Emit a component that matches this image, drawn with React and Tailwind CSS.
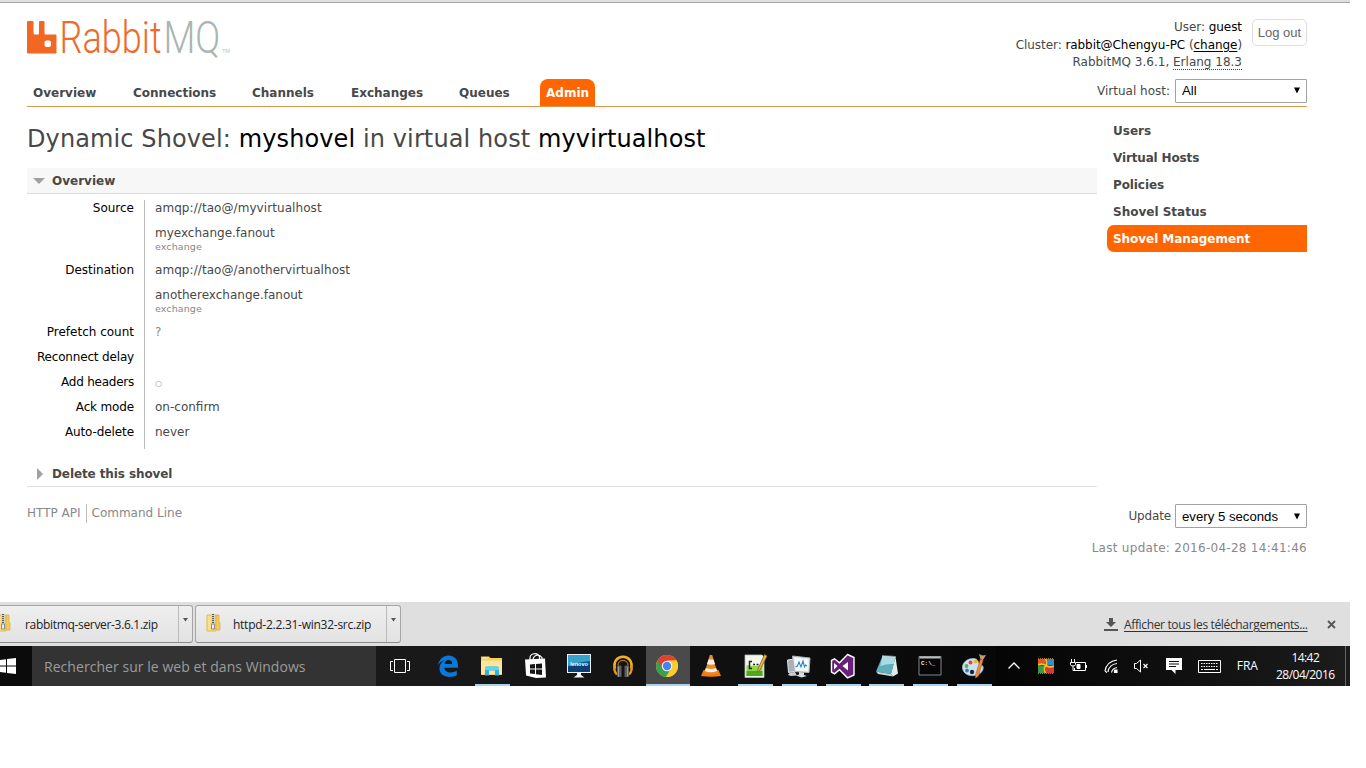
import React from "react";

const tabs = [
  ["Overview", "w-[76px]"],
  ["Connections", "w-[95px]"],
  ["Channels", "w-[75px]"],
  ["Exchanges", "w-[84px]"],
  ["Queues", "w-[63px]"],
];

const sideLinks = [
  ["Users", ""],
  ["Virtual Hosts", "tracking-[-0.15px]"],
  ["Policies", "tracking-[-0.1px]"],
  ["Shovel Status", ""],
];

function Logo() {
  return (
    <svg width="216" height="54" viewBox="0 -9 216 54" className="block">
      <path
        d="M1 2h4.500q1 0 1 1v11q0 1.500 1 1.500h3.500q1 0 1-1.500v-11q0-1 1-1h3.500q1 0 1 1v11q0 1.500 1 1.500h10q1 0 1 1v17q0 1-1 1h-27.500q-1 0-1-1v-30.500q0-1 1-1z"
        fill="#f26822"
      />
      <rect x="17.500" y="21.500" width="6.500" height="6.500" rx="2" fill="#fff" />
      <g transform="translate(32.500 0) scale(.82 1)">
        <text x="0" y="34" fontSize="45" textLength="124.500" lengthAdjust="spacingAndGlyphs" fill="#ee6b2b" className="font-['Roboto','Liberation_Sans',sans-serif] font-light">Rabbit</text>
      </g>
      <g transform="translate(136.500 0) scale(.8 1)">
        <text x="0" y="34" fontSize="45" textLength="71" lengthAdjust="spacingAndGlyphs" fill="#a9b5b0" className="font-['Roboto','Liberation_Sans',sans-serif] font-light">MQ</text>
      </g>
      <text x="195" y="34" fontSize="5.500" fill="#b9c2be" className="font-['Liberation_Sans',sans-serif]">TM</text>
    </svg>
  );
}

function Select({ children }) {
  return (
    <div className="flex h-[24px] w-[132px] items-center justify-between rounded-[1px] border border-[#a2a2a2] bg-white pr-[5px] pl-[6px] font-['Liberation_Sans',sans-serif] text-[13.2px] text-black">
      <span className="pt-px">{children}</span>
      <svg width="8" height="7" viewBox="0 0 8 7"><path d="M1 .5h6L4 6.500z" fill="#000" /></svg>
    </div>
  );
}

function Row({ label, children, last, fit = "" }) {
  return (
    <div className="flex">
      <div className={"w-[117px] pt-px pr-[10px] text-right leading-[15px] text-black " + fit}>{label}</div>
      <div className="border-l border-[#bbb] pb-[9px] pl-[10px]">{children}</div>
    </div>
  );
}

function Line({ children }) {
  return <div className="h-[16px] pt-px leading-[15px]">{children}</div>;
}

function Endpoint({ uri, name }) {
  return (
    <>
      <div className="tracking-[0.07px]"><Line>{uri}</Line></div>
      <div className="pt-[9px]">
        <Line>{name}</Line>
        <div className="h-[12px] text-[9.5px] leading-[12px] tracking-[0.1px] text-[#888]">exchange</div>
      </div>
    </>
  );
}

function Zip() {
  return (
    <svg width="15" height="18" viewBox="0 0 15 18">
      <path d="M1 1h9v16H1z" fill="#fbe08a" stroke="#e3b84a" />
      <path d="M10 1h3v8h1v7h-4z" fill="#f3cb5b" stroke="#d9ab37" strokeWidth=".7" />
      <path d="M5 0h4v16H5z" fill="#d8d5c4" />
      <path d="M7 0v12" stroke="#555" strokeWidth="2" strokeDasharray="1 1" />
      <path d="M5.500 10h3v5h-3z" fill="#eee" stroke="#777" strokeWidth=".8" />
    </svg>
  );
}

function Download({ name, className, nameClass }) {
  return (
    <div className={"flex h-[38px] rounded-[3px] border border-[#a6a6a6] border-b-[#8c8c8c] bg-gradient-to-b from-[#efefef] to-[#e2e2e2] " + className}>
      <div className="flex flex-1 items-center">
        <div className="mb-[3px]"><Zip /></div>
        <span className={"whitespace-nowrap pt-[2px] text-[12px] text-[#222] " + nameClass}>{name}</span>
      </div>
      <div className="flex w-[14px] justify-center border-l border-[#bbb] pt-[12px]">
        <svg width="5" height="4" viewBox="0 0 5 4"><path d="M0 0h5L2.500 3.500z" fill="#555" /></svg>
      </div>
    </div>
  );
}

const Svg = ({ children, size = 26 }) => (
  <svg width={size} height={size} viewBox="0 0 26 26" fill="none">{children}</svg>
);

const EdgeIcon = () => (
  <Svg>
    <path d="M3 12.500C4 6 8.500 2.500 13.500 2.500c6 0 9.500 4.200 9.500 10v2.300H9.400c.2 3.300 3 4.700 6.200 4.700 2.300 0 4.300-.6 6.200-1.700v4.500c-2 1.200-4.600 1.700-7.300 1.700-6 0-10-3.300-10-8.700 0-3.500 2-6.500 5-8.100C6.500 8 4.500 9.500 3 12.500zM9.600 11h7.600c0-2.600-1.300-3.900-3.600-3.900-2.200 0-3.700 1.500-4 3.900z" fill="#0b78d7" />
  </Svg>
);
const ExplorerIcon = () => (
  <Svg>
    <path d="M2 3.500h8l1.500 1.500h11.500v17h-21z" fill="#f5cd63" />
    <path d="M2 7.500h21v13.500h-21z" fill="#fde69a" />
    <path d="M3.500 5h5" stroke="#fff4c5" />
    <path d="M6 15q0-1.500 1.500-1.500h11q1.500 0 1.500 1.500v7.500h-4v-5h-6v5h-4z" fill="#2fb3e3" />
    <path d="M6 15q0-1.500 1.500-1.500h11q1.500 0 1.500 1.500v2H6z" fill="#6bd0ee" />
  </Svg>
);
const StoreIcon = () => (
  <Svg>
    <path d="M2 6.500l20 -1 1 19-10 .5-10-2.500z" fill="#fff" />
    <path d="M7 7V5c0-5 8-6 9.500-1v3M10 6c1-4 6-5.500 9-1.500V7" stroke="#fff" strokeWidth="1.200" />
    <path d="M7 11.500l5-.4v4.500H7zM13 11l6-.5v5.100h-6zM7 16.600H12v4.500l-5-.6zM13 16.600h6V22l-6-.7z" fill="#151515" />
  </Svg>
);
const LenovoIcon = () => (
  <Svg>
    <path d="M1 1h24v19H1z" fill="#e8f2f6" />
    <path d="M2 2h22v17H2z" fill="#0e5e93" />
    <path d="M2 2h22v6q-12 1-22 5z" fill="#38a2ca" />
    <path d="M2 14q12-4 22-2v7H2z" fill="#0b3f75" />
    <text x="13" y="12.500" fontSize="5.500" textAnchor="middle" fill="#fff" className="font-['Liberation_Sans',sans-serif] font-bold">lenovo</text>
    <path d="M11 20h4v2l3.500 2.500h-11L11 22z" fill="#f2f5f6" />
  </Svg>
);
const MusicIcon = () => (
  <Svg>
    <path d="M5 15.500C3 8.500 7.500 3.800 13 3.800s10 4.700 8 11.700" stroke="#f5b01f" strokeWidth="2.600" />
    <path d="M8 12.500C8 9 10 7.500 13 7.500s5 1.500 5 5" stroke="#d98a1c" strokeWidth="1" />
    <path d="M5 12.500q-2 5 2 9M21 12.500q2 5-2 9" stroke="#e8961b" strokeWidth="2.400" />
    <rect x="7" y="12.500" width="4.500" height="11.500" rx="1" fill="#5f5f5f" />
    <rect x="14.500" y="12.500" width="4.500" height="11.500" rx="1" fill="#5f5f5f" />
    <path d="M8.500 13.500v10M17.500 13.500v10" stroke="#999" />
  </Svg>
);
const ChromeIcon = () => (
  <Svg>
    <circle cx="13" cy="13" r="11" fill="#fbcb2f" />
    <path d="M13 13L3.500 7.500A11 11 0 0 1 22.500 7.500L13 8z" fill="#e0402f" />
    <path d="M3.500 7.500A11 11 0 0 0 12 24l5-8.500-4-2.500z" fill="#33a352" />
    <path d="M13 7.500h9.500a11 11 0 0 1-10.500 16.500l5.500-8.500z" fill="#fbcb2f" />
    <path d="M3.500 7.500L8.500 16 9 11l4-4z" fill="#e0402f" />
    <circle cx="13" cy="13" r="5.300" fill="#f5f5f5" />
    <circle cx="13" cy="13" r="4.200" fill="#4384ef" />
  </Svg>
);
const VlcIcon = () => (
  <Svg>
    <path d="M5.500 17h15l2.500 6q-10 1.500-20 0z" fill="#ee7c16" />
    <path d="M11.800 2h2.400l5.300 18q-6.500 2.500-13 0z" fill="#f58720" />
    <path d="M10.500 6.500h5l1.500 4.500q-4 1.500-8 0zM7.800 15q5 2 10.400 0l1 3q-6.200 2.500-12.400 0z" fill="#f2f2f0" />
  </Svg>
);
const NotepadPlusIcon = () => (
  <Svg>
    <path d="M3 2h17l2 2v20.500H3z" fill="#f3f6ec" stroke="#b9c0b1" strokeWidth=".8" />
    <path d="M4.500 12q8 2 16 0v11h-16z" fill="#8ed44c" />
    <path d="M4.500 18h16v5h-16z" fill="#4fa91b" />
    <path d="M10 8.500H7.500v7H10M11 11.500h2M14.500 11.500h2" stroke="#202a12" strokeWidth="1.500" />
    <path d="M22.500 1.500L16 16l-.5 3.500 2.500-2.500L25 3z" fill="#e9b74b" stroke="#8c5c23" strokeWidth=".8" />
  </Svg>
);
const MonitorIcon = () => (
  <Svg>
    <path d="M1.500 7l7-1 2 12-8 1.500z" fill="#a9b1b6" stroke="#e3e7ea" />
    <path d="M4 19.500l5-.5 2 3.500-6 .5-3-1z" fill="#c8ced2" />
    <path d="M6.500 3l17.500 2-1 14.500-14.500-1z" fill="#e7edf1" stroke="#a9b3ba" />
    <path d="M8.500 5l14 1.500-1 11.500L10 17z" fill="#f6fbff" />
    <path d="M9.500 14l2-1 1.500-4 2 5 2-6 1.500 6 1-2 1.500 1" stroke="#2f84c5" strokeWidth="1.100" />
    <path d="M13 19l5 .5v2.500l3 1-5.500 1.500-5.500-2 3-1z" fill="#d6dbde" />
  </Svg>
);
const VsIcon = () => (
  <Svg>
    <path d="M17.500 1.500l6.500 3v17.500l-6.500 2.800-8-8-5 4-3-1.800V7.500l3-1.700 5 4z" fill="#68217a" stroke="#fff" strokeWidth="1.400" />
    <path d="M18 9v8.500L12.500 13zM4 10v6.500L7.500 13z" fill="#fff" />
  </Svg>
);
const NotepadIcon = () => (
  <Svg>
    <path d="M9.500 3l13 1-4.500 17L3 18.500z" fill="#5fafbf" />
    <path d="M9.500 3l13 1-1.800 7q-7-.5-13.500 2z" fill="#a9dbe2" />
    <path d="M22.500 4L25 20.500l-5 3-2-2.500z" fill="#e2ecee" />
    <path d="M3 18.500l15 2.500 2 2.500-15-2.500z" fill="#c4d3d6" />
    <path d="M9.500 2.800l13 1" stroke="#e8eeee" strokeDasharray="1 1" strokeWidth="1.600" />
  </Svg>
);
const CmdIcon = () => (
  <Svg>
    <path d="M2 3.500h22v18.500h-22z" fill="#050505" stroke="#7f888c" />
    <path d="M2.500 4.500h21" stroke="#b8bec1" strokeWidth="2" />
    <text x="4" y="11.500" fontSize="6" fill="#eee" className="font-['Liberation_Mono',monospace] font-bold">C:\_</text>
  </Svg>
);
const PaintIcon = () => (
  <Svg>
    <path d="M13 5.500C6 5 1 10 1.500 15c.5 6 7 8.500 12.500 7.500 6-1 9-5.500 8-9-.8-2-3-1-4-3s-1-4.500-5-5z" fill="#cde2f0" stroke="#8fb2ca" strokeWidth=".8" />
    <circle cx="5.500" cy="13" r="1.900" fill="#59b04b" /><circle cx="9.500" cy="9.500" r="2" fill="#d94a3c" />
    <circle cx="14.500" cy="8.500" r="2" fill="#e6ba31" /><circle cx="6" cy="17.500" r="1.900" fill="#3d7dd0" />
    <circle cx="11" cy="19" r="2.200" fill="#1b2730" />
    <path d="M19.500 6l2.500 1-4.500 16-3 2V22z" fill="#e89042" stroke="#b15c20" strokeWidth=".6" />
    <path d="M18 1l3.500 1.500L25 2l-3 5-2.500-1z" fill="#c99a70" />
  </Svg>
);

const apps = [
  [EdgeIcon, ""], [ExplorerIcon, "open"], [StoreIcon, ""], [LenovoIcon, ""], [MusicIcon, ""], [ChromeIcon, "active"],
  [VlcIcon, ""], [NotepadPlusIcon, "open"], [MonitorIcon, "open"], [VsIcon, "open"], [NotepadIcon, "open"], [CmdIcon, "open"], [PaintIcon, "open"],
];

function Taskbar() {
  return (
    <div className="flex h-[40px] bg-[#0b0b0b] font-['Open_Sans','Noto_Sans',sans-serif] text-white">
      <div className="flex w-[32px] items-center">
        <svg width="16" height="16" viewBox="0 0 16 16"><path d="M0 2l6-.8V7.500H0zM7 1.100L16 0v7.500H7zM0 8.500h6v6.300L0 14zM7 8.500h9V16l-9-1.100z" fill="#fff" /></svg>
      </div>
      <div className="flex w-[344px] items-center bg-[#333] pl-[12px] pt-px text-[14px] tracking-[0.05px] text-[#9c9c9c]">
        <span className="whitespace-nowrap">Rechercher sur le web et dans Windows</span>
      </div>
      <div className="flex w-[50.500px] items-center bg-[#191919] pl-[14px]">
        <svg width="20" height="14" viewBox="0 0 20 14" fill="none" stroke="#fff"><path d="M4.500.5h11v13h-11zM3 2.500H.5v9H3M17 2.500h2.500v9H17" /></svg>
      </div>
      <div className="flex bg-gradient-to-r from-[#191919] via-[#111] to-[#080808]">
        {apps.map(([Icon, state], i) => (
          <div key={i} className={state === "active" ? "flex w-[43.85px] flex-col items-center bg-[#4a4a4a]" : "flex w-[43.85px] flex-col items-center"}>
            <div className="flex h-[38px] items-center pt-[2px] pr-px"><Icon /></div>
            {state && <div className={state === "active" ? "h-[2px] w-full bg-[#a9d3f2]" : "h-[2px] w-[35px] bg-[#a9d3f2]"} />}
          </div>
        ))}
      </div>
      <div className="flex flex-1 items-center bg-gradient-to-r from-[#050505] to-[#1c1c1c]">
        <svg width="12" height="8" viewBox="0 0 12 8" className="ml-[11.400px]" fill="none" stroke="#fff" strokeWidth="1.300"><path d="M.5 6.500L6 1l5.500 5.500" /></svg>
        <svg width="16" height="16" viewBox="0 0 16 16" className="ml-[18px]">
          <path d="M0 1h7.500v6.500H0z" fill="#dd5b2a" /><path d="M8 1h8v6.500H8z" fill="#2f8fd0" />
          <path d="M0 8h7.500v7H0z" fill="#3a9b45" /><path d="M8 8h8v7H8z" fill="#d53b2e" />
          <path d="M7.500 1q2 4 0 7t0 7M0 7q4-2 8 .5T16 8" stroke="#f2c22e" strokeWidth="1.600" fill="none" />
          <path d="M0 .5h16M0 15.500h16" stroke="#a5762c" strokeDasharray="1 1" />
        </svg>
        <svg width="17" height="14" viewBox="0 0 17 14" className="ml-[16px]" fill="none" stroke="#fff"><path d="M6 3.500h9.500v8H4.500V9M16.500 6v3M1.500 0v3M4.500 0v3M.5 3.500h5v2q0 1.500-2.500 1.500T.5 5.500zM3 7v4.500h2" /><path d="M7 5.500h3v4H7z" fill="#fff" /></svg>
        <svg width="14" height="14" viewBox="0 0 14 14" className="ml-[17px]" fill="none" stroke="#fff" strokeWidth="1.200"><path d="M1 12C2 6 6 2 13 1M4 13c.5-4.500 4-8 9-8.500M7.500 13.500c.5-2.500 2.500-4.500 5.500-5" /><path d="M1 12l2 1.500M10.500 11h2.500v2.500h-2.500z" fill="#fff" /></svg>
        <svg width="15" height="14" viewBox="0 0 15 14" className="ml-[16px]" fill="none" stroke="#fff"><path d="M.5 4.500h2l4-3.500v12l-4-3.500h-2z" /><path d="M9.500 5l4 4M13.500 5l-4 4" strokeWidth="1.200" /></svg>
        <svg width="16" height="16" viewBox="0 0 16 16" className="ml-[17px]"><path d="M0 0h16v12H9.500v4l-4-4H0z" fill="#fff" /><path d="M3 3.500h10M3 6h10M3 8.500h7" stroke="#111" strokeWidth="1.200" /></svg>
        <svg width="23" height="13" viewBox="0 0 23 13" className="ml-[16px]" fill="none" stroke="#fff"><path d="M.5.5h22v12H.5z" /><path d="M3 3.500h17M3 6.500h17" strokeDasharray="1.500 1" /><path d="M3 9.500h2M6 9.500h11M18 9.500h2" /></svg>
        <span className="ml-[16px] w-[22px] text-[12px] tracking-[-0.1px]">FRA</span>
        <div className="ml-[11.500px] flex w-[70px] flex-col items-center pb-px text-[12px] leading-[17px] tracking-[-0.6px]">
          <span>14:42</span>
          <span className="whitespace-nowrap tracking-[-0.5px]">28/04/2016</span>
        </div>
        <div className="ml-auto h-full w-[5px] border-l border-[#666]" />
      </div>
    </div>
  );
}

export default function App() {
  return (
    <div className="h-[768px] w-[1366px] overflow-hidden bg-white font-['DejaVu_Sans',Verdana,sans-serif] text-[12px] text-[#484848]">
      <div className="flex h-[686px] w-[1350px] flex-col">
        <div className="h-[3px] shrink-0 border-b border-[#a5a5a5] bg-[#dfdfdf]" />
        <header className="mr-[43px] ml-[27px] flex h-[104px] shrink-0 justify-between border-b border-[#dc9645]">
          <div className="flex flex-col justify-between pt-[7px]">
            <Logo />
            <nav className="flex gap-[24px] font-bold">
              {tabs.map(([name, w]) => (
                <a key={name} className={"flex h-[27px] items-center whitespace-nowrap px-[6px] " + w}>{name}</a>
              ))}
              <a className="flex h-[27px] w-[55px] items-center rounded-t-[8px] bg-[#ff6600] px-[6px] text-white">Admin</a>
            </nav>
          </div>
          <div className="flex flex-col items-end">
            <div className="flex gap-[10px] pt-[15px]">
              <div className="pt-px text-right leading-[17.500px]">
                <div className="tracking-[-0.05px]">User: <span className="text-black">guest</span></div>
                <div className="tracking-[-0.06px]">Cluster: <span className="text-black">rabbit@Chengyu-PC</span> (<span className="text-black underline underline-offset-2">change</span>)</div>
                <div>RabbitMQ 3.6.1, <span className="inline-block h-[16px] border-b border-dotted border-[#444]">Erlang 18.3</span></div>
              </div>
              <button className="mt-px flex h-[27px] w-[55px] items-center justify-center whitespace-nowrap rounded-[5px] border border-[#ddd] font-['Liberation_Sans',sans-serif] text-[13px] text-[#666]">Log out</button>
            </div>
            <div className="mt-[7px] flex items-center gap-[5px]">
              <span>Virtual host:</span>
              <Select>All</Select>
            </div>
          </div>
        </header>

        <div className="mr-[43px] ml-[27px] flex h-[387px] shrink-0 justify-between">
          <main className="w-[1070px]">
            <h1 className="h-[61px] whitespace-nowrap pt-[16px] text-[24px] leading-[32px] tracking-[0.11px]">
              Dynamic Shovel: <span className="text-black">myshovel</span> in virtual host <span className="text-black">myvirtualhost</span>
            </h1>
            <h2 className="flex h-[26px] items-center border-b border-[#ddd] bg-[#f7f7f7] pl-[6px] font-bold">
              <svg width="12" height="6" viewBox="0 0 12 6" className="mr-[7px]"><path d="M0 0h12L6 6z" fill="#a0a0a0" /></svg>
              Overview
            </h2>
            <div className="mt-[6px]">
              <Row label="Source"><Endpoint uri="amqp://tao@/myvirtualhost" name="myexchange.fanout" /></Row>
              <Row label="Destination"><Endpoint uri="amqp://tao@/anothervirtualhost" name="anotherexchange.fanout" /></Row>
              <Row label="Prefetch count"><Line><span className="text-[#888]">?</span></Line></Row>
              <Row label="Reconnect delay" fit="tracking-[-0.17px]"><Line /></Row>
              <Row label="Add headers" fit="tracking-[-0.24px]"><Line><span className="text-[8px] text-[#888]">○</span></Line></Row>
              <Row label="Ack mode" fit="tracking-[-0.15px]"><Line>on-confirm</Line></Row>
              <Row label="Auto-delete" fit="tracking-[-0.1px]"><Line>never</Line></Row>
            </div>
            <h2 className="mt-[12px] flex h-[26px] items-center border-b border-[#ddd] pl-[10px] font-bold tracking-[-0.1px]">
              <svg width="6" height="12" viewBox="0 0 6 12" className="mr-[9px]"><path d="M0 0v12l6-6z" fill="#a0a0a0" /></svg>
              Delete this shovel
            </h2>
          </main>
          <aside className="w-[200px] pt-[10px] font-bold">
            {sideLinks.map(([name, fit]) => (
              <a key={name} className={"flex h-[27px] items-center pl-[6px] " + fit}>{name}</a>
            ))}
            <a className="flex h-[27px] items-center rounded-l-[7px] bg-[#ff6600] pl-[6px] tracking-[-0.05px] text-white">Shovel Management</a>
          </aside>
        </div>

        <footer className="mr-[43px] ml-[27px] flex h-[108px] shrink-0 justify-between text-[#888]">
          <div className="mt-[10px] flex h-[19px] self-start">
            <div className="border-r border-[#bbb] pr-[5px] leading-[19px]">HTTP API</div>
            <div className="pl-[5px] leading-[19px]">Command Line</div>
          </div>
          <div className="flex flex-col items-end pt-[10px]">
            <div className="flex items-center gap-[4px] text-[#484848]">
              <span className="tracking-[-0.15px]">Update</span>
              <Select>every 5 seconds</Select>
            </div>
            <div className="mt-[12px] leading-[16px] tracking-[0.28px]">Last update: 2016-04-28 14:41:46</div>
          </div>
        </footer>

        <div className="flex h-[44px] shrink-0 items-start bg-[#dfdfdf] pt-[3px] font-['Open_Sans','Noto_Sans',sans-serif] text-[#333]">
          <Download name="rabbitmq-server-3.6.1.zip" className="-ml-[5px] w-[198px]" nameClass="ml-[14px] tracking-[-0.32px]" />
          <Download name="httpd-2.2.31-win32-src.zip" className="ml-[2px] w-[206px] pl-[10px]" nameClass="ml-[12px] tracking-[-0.26px]" />
          <div className="ml-auto flex h-[38px] items-center pr-[14px]">
            <svg width="14" height="13" viewBox="0 0 14 13" className="mr-[6px]"><path d="M5 0h4v4h3L7 9 2 4h3zM0 11h14v2H0z" fill="#555" /></svg>
            <span className="w-[185px] whitespace-nowrap pt-[2px] text-[12px] tracking-[-0.35px] underline underline-offset-2">Afficher tous les téléchargements...</span>
            <svg width="9" height="9" viewBox="0 0 9 9" className="ml-[18px]"><path d="M1 1l7 7M8 1L1 8" stroke="#555" strokeWidth="1.800" /></svg>
          </div>
        </div>
        <Taskbar />
      </div>
    </div>
  );
}
